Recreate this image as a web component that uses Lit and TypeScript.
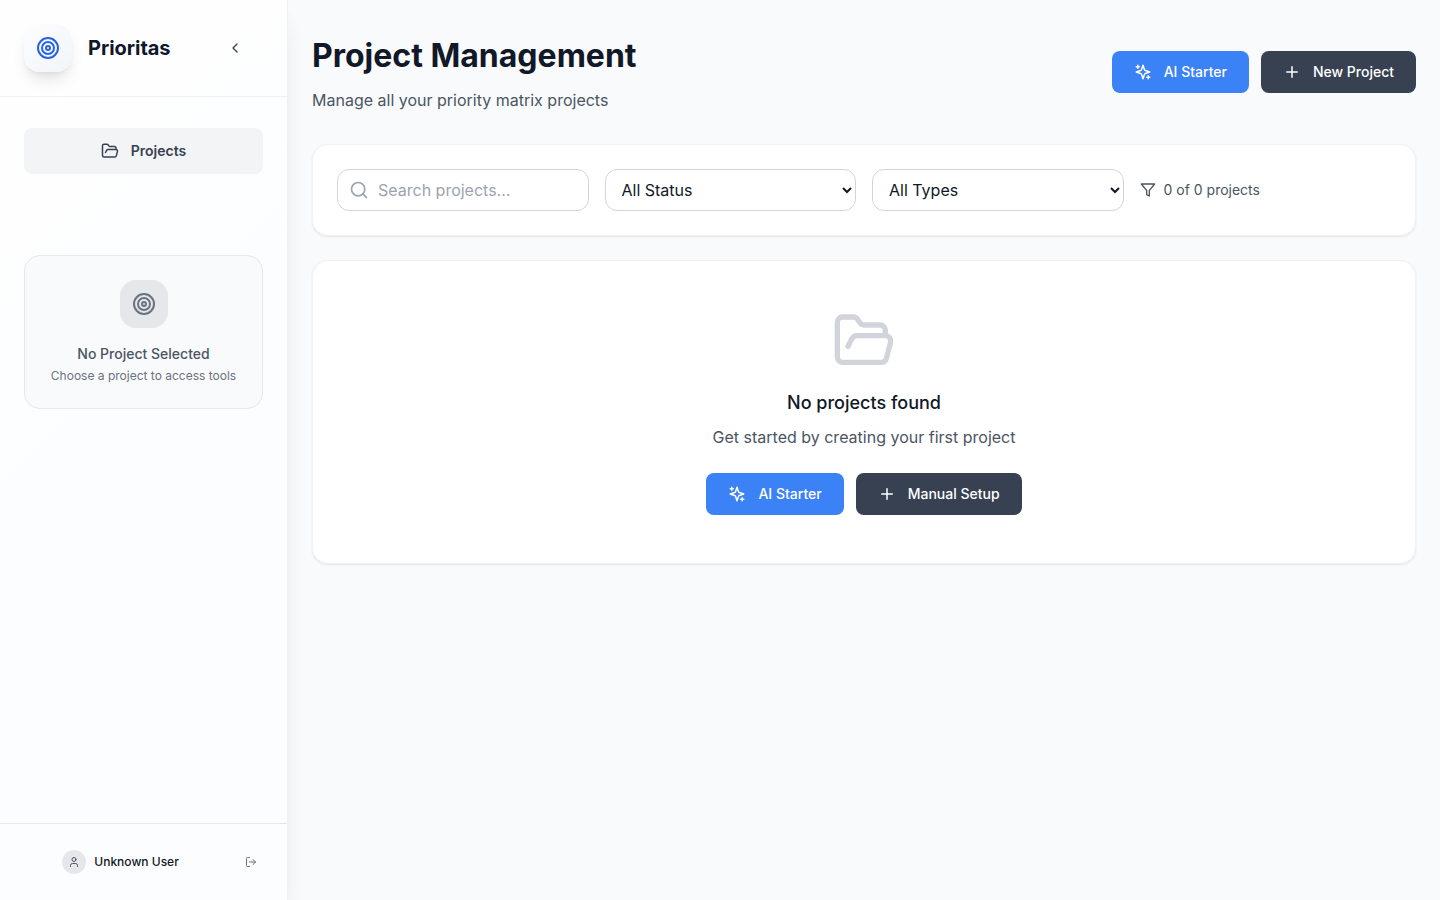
import { LitElement, html, css, svg } from "lit";
import { customElement, property } from "lit/decorators.js";

const ICONS: Record<string, unknown> = {
  target: svg`<circle cx="12" cy="12" r="10"/><circle cx="12" cy="12" r="6"/><circle cx="12" cy="12" r="2"/>`,
  chevronLeft: svg`<path d="m15 18-6-6 6-6"/>`,
  folderOpen: svg`<path d="m6 14 1.5-2.9A2 2 0 0 1 9.24 10H20a2 2 0 0 1 1.94 2.5l-1.54 6a2 2 0 0 1-1.95 1.5H4a2 2 0 0 1-2-2V5a2 2 0 0 1 2-2h3.9a2 2 0 0 1 1.69.9l.81 1.2a2 2 0 0 0 1.67.9H18a2 2 0 0 1 2 2v2"/>`,
  sparkles: svg`<path d="m12 3-1.912 5.813a2 2 0 0 1-1.275 1.275L3 12l5.813 1.912a2 2 0 0 1 1.275 1.275L12 21l1.912-5.813a2 2 0 0 1 1.275-1.275L21 12l-5.813-1.912a2 2 0 0 1-1.275-1.275L12 3Z"/><path d="M5 3v4"/><path d="M19 17v4"/><path d="M3 5h4"/><path d="M17 19h4"/>`,
  plus: svg`<path d="M5 12h14"/><path d="M12 5v14"/>`,
  search: svg`<circle cx="11" cy="11" r="8"/><path d="m21 21-4.3-4.3"/>`,
  filter: svg`<polygon points="22 3 2 3 10 12.46 10 19 14 21 14 12.46 22 3"/>`,
  user: svg`<path d="M19 21v-2a4 4 0 0 0-4-4H9a4 4 0 0 0-4 4v2"/><circle cx="12" cy="7" r="4"/>`,
  logOut: svg`<path d="M9 21H5a2 2 0 0 1-2-2V5a2 2 0 0 1 2-2h4"/><polyline points="16 17 21 12 16 7"/><line x1="21" x2="9" y1="12" y2="12"/>`,
};

@customElement("ui-icon")
export class UiIcon extends LitElement {
  static styles = css`
    :host { display: block; flex: none; width: 18px; height: 18px; }
    svg { display: block; width: 100%; height: 100%; }
  `;
  @property() name = "";
  render() {
    return html`<svg viewBox="0 0 24 24" fill="none" stroke="currentColor" stroke-width="2"
      stroke-linecap="round" stroke-linejoin="round">${ICONS[this.name]}</svg>`;
  }
}

@customElement("app-root")
export class AppRoot extends LitElement {
  static styles = css`
    :host {
      display: flex; height: 100vh; overflow: hidden;
      color: #111827;
      font: 400 16px/24px Inter, sans-serif;
      background: #f9fafc;
    }
    * { box-sizing: border-box; margin: 0; }
    button, input, select { font: inherit; color: inherit; letter-spacing: inherit; }
    button { border: 0; background: none; padding: 0; }

    .sidebar {
      width: 288px; flex: none; display: flex; flex-direction: column; position: relative;
      background: linear-gradient(135deg, #fefefe 0%, #fcfdff 60%);
      border-right: 1px solid #eff1f5;
      box-shadow: 0 20px 25px -5px rgba(0,0,0,.06), 0 10px 20px -5px rgba(0,0,0,.04);
    }
    .brand { height: 97px; padding: 0 24px; border-bottom: 1px solid #eef0f5; display: flex; align-items: center; }
    .logo {
      width: 48px; height: 48px; border-radius: 16px; color: #2563eb;
      display: grid; place-items: center;
      background: linear-gradient(135deg, #fdfdfe, #f1f5fb);
      box-shadow: 0 10px 15px -3px rgba(0,0,0,.1), 0 4px 6px -4px rgba(0,0,0,.1);
    }
    .icon24 { width: 24px; height: 24px; }
    .icon20 { width: 20px; height: 20px; }
    .icon16 { width: 16px; height: 16px; }
    .icon12 { width: 12px; height: 12px; }
    .name { margin-left: 16px; font-size: 20px; line-height: 28px; font-weight: 700; letter-spacing: -0.04px; color: #0f172a; }
    .collapse { margin-left: auto; margin-right: 12px; padding: 8px; color: #374151; }
    .nav { padding: 31px 24px 0; flex: 1; }
    .nav-item {
      width: 100%; height: 46px; border-radius: 8px; background: #f3f4f6; color: #374151;
      display: flex; align-items: center; justify-content: center; gap: 12px;
      font-size: 14px; line-height: 20px; font-weight: 600;
    }
    .none {
      margin-top: 81px; padding: 24px; border: 1px solid #e5e7eb; border-radius: 16px; background: #f9fafb;
      display: flex; flex-direction: column; align-items: center; text-align: center; white-space: nowrap;
    }
    .none-icon { width: 48px; height: 48px; border-radius: 16px; background: #e5e7eb; color: #6b7280; display: grid; place-items: center; margin-bottom: 16px; }
    .none-title { font-size: 14px; line-height: 20px; font-weight: 500; color: #4b5563; }
    .none-sub { margin-top: 4px; font-size: 12px; line-height: 16px; color: #6b7280; }
    .account { height: 77px; border-top: 1px solid #e5e7eb; padding: 0 24px 0 62px; display: flex; align-items: center; gap: 8.3px; }
    .avatar { width: 24px; height: 24px; border-radius: 50%; background: #e5e7eb; color: #4b5563; display: grid; place-items: center; }
    .user { font-size: 12px; line-height: 16px; font-weight: 500; }
    .logout { margin-left: auto; padding: 6px; color: #6b7280; }

    .main { flex: 1; padding: 24px; display: flex; flex-direction: column; gap: 24px; }
    .head { height: 96px; display: flex; align-items: center; justify-content: space-between; }
    h1 { font-size: 32px; line-height: 40px; font-weight: 700; color: #111827; padding-top: 4px; }
    .lead { margin-top: 12px; color: #4b5563; }
    .actions { display: flex; gap: 12px; }
    .btn {
      height: 42px; padding: 0 22px; border-radius: 8px; color: #fff; background: #374151;
      display: flex; align-items: center; gap: 12px; font-size: 14px; line-height: 20px; font-weight: 500;
    }
    .btn.blue { background: #3b82f6; }
    .card { background: #fff; border: 1px solid #f0f2f5; border-radius: 16px; box-shadow: 0 1px 3px rgba(0,0,0,.05), 0 1px 2px rgba(0,0,0,.04); }
    .filters { padding: 24px; display: grid; grid-template-columns: repeat(4, 1fr); gap: 16px; align-items: center; }
    .search { position: relative; }
    .search ui-icon { position: absolute; left: 12px; top: 11px; color: #9ca3af; }
    .field { display: block; width: 100%; height: 42px; border: 1px solid #d1d5db; border-radius: 12px; background: #fff; outline: none; }
    input.field { padding: 8px 16px 8px 40px; }
    input.field::placeholder { color: #9ca3af; opacity: 1; }
    select.field { padding: 8px 0 8px 12px; }
    .count { display: flex; align-items: center; gap: 8px; font-size: 14px; line-height: 20px; color: #4b5563; }
    .empty { padding: 48px; display: flex; flex-direction: column; align-items: center; }
    .empty-icon { width: 64px; height: 64px; color: #d1d5db; margin-bottom: 16px; }
    h3 { font-size: 18px; line-height: 28px; font-weight: 500; color: #111827; margin-bottom: 8px; }
    .hint { color: #4b5563; margin-bottom: 24px; }
  `;

  private actions(second: string) {
    return html`<div class="actions">
      <button class="btn blue"><ui-icon name="sparkles"></ui-icon><span>AI Starter</span></button>
      <button class="btn"><ui-icon name="plus"></ui-icon><span>${second}</span></button>
    </div>`;
  }

  render() {
    return html`
      <aside class="sidebar">
        <div class="brand">
          <div class="logo"><ui-icon class="icon24" name="target"></ui-icon></div>
          <span class="name">Prioritas</span>
          <button class="collapse" aria-label="Collapse"><ui-icon class="icon16" name="chevronLeft"></ui-icon></button>
        </div>
        <nav class="nav">
          <button class="nav-item"><ui-icon name="folderOpen"></ui-icon><span>Projects</span></button>
          <div class="none">
            <div class="none-icon"><ui-icon class="icon24" name="target"></ui-icon></div>
            <div class="none-title">No Project Selected</div>
            <div class="none-sub">Choose a project to access tools</div>
          </div>
        </nav>
        <div class="account">
          <div class="avatar"><ui-icon class="icon12" name="user"></ui-icon></div>
          <span class="user">Unknown User</span>
          <button class="logout" aria-label="Log out"><ui-icon class="icon12" name="logOut"></ui-icon></button>
        </div>
      </aside>
      <main class="main">
        <header class="head">
          <div>
            <h1>Project Management</h1>
            <p class="lead">Manage all your priority matrix projects</p>
          </div>
          ${this.actions("New Project")}
        </header>
        <section class="card filters">
          <div class="search">
            <ui-icon class="icon20" name="search"></ui-icon>
            <input class="field" placeholder="Search projects..." />
          </div>
          <select class="field"><option>All Status</option></select>
          <select class="field"><option>All Types</option></select>
          <div class="count"><ui-icon class="icon16" name="filter"></ui-icon><span>0 of 0 projects</span></div>
        </section>
        <section class="card empty">
          <ui-icon class="empty-icon" name="folderOpen"></ui-icon>
          <h3>No projects found</h3>
          <p class="hint">Get started by creating your first project</p>
          ${this.actions("Manual Setup")}
        </section>
      </main>
    `;
  }
}
